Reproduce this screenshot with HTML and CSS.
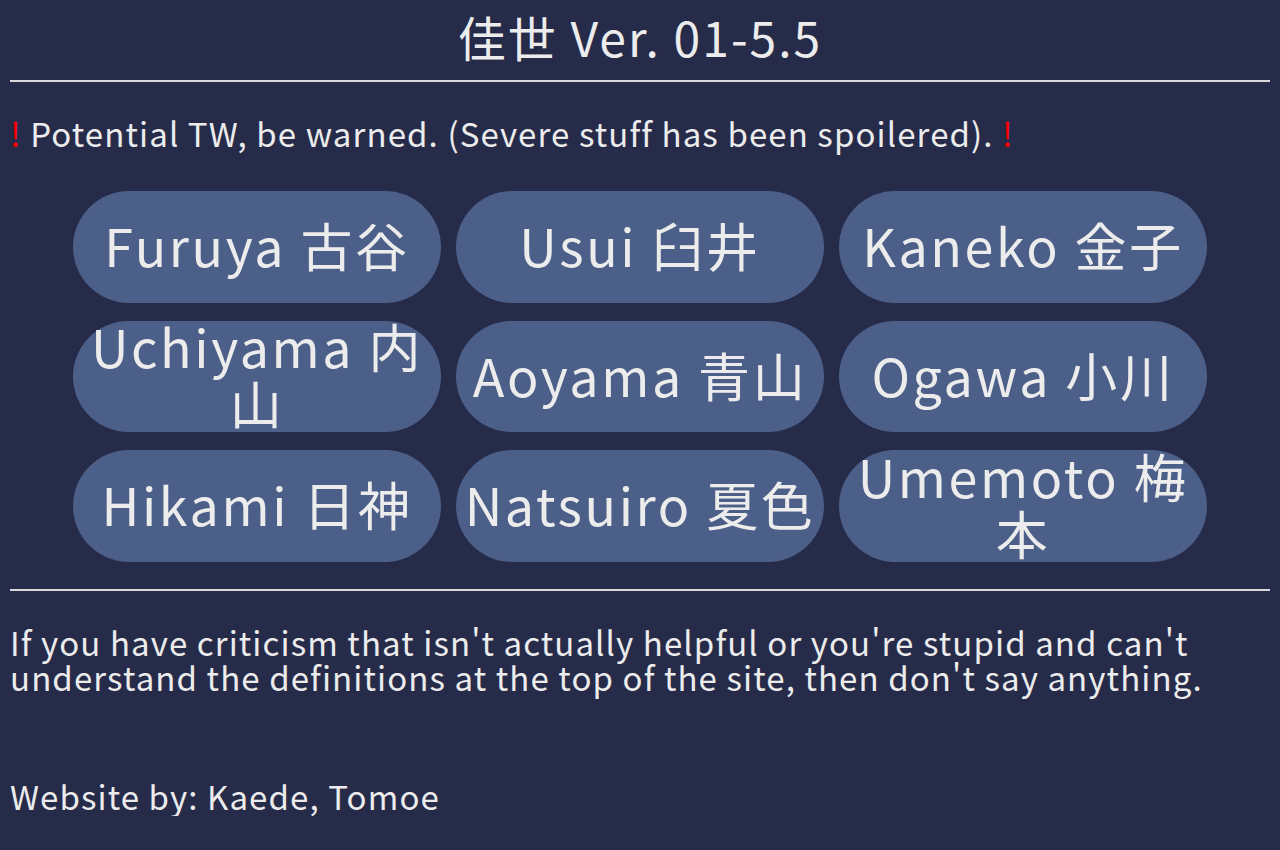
FILE: index.html
```html
<!DOCTYPE html>
<html lang="ja">
<head>
<meta charset="utf-8">
<title>佳世 Ver. 01-5.5</title>
<link rel="stylesheet" href="styles.css">
</head>
<body>
<h1 class="title">佳世 Ver. 01-5.5</h1>
<hr class="rule">
<p class="warning"><span class="bang">!</span> Potential TW, be warned. (Severe stuff has been spoilered). <span class="bang">!</span></p>
<div class="grid">
  <a class="pill">Furuya 古谷</a>
  <a class="pill">Usui 臼井</a>
  <a class="pill">Kaneko 金子</a>
  <a class="pill">Uchiyama 内山</a>
  <a class="pill">Aoyama 青山</a>
  <a class="pill">Ogawa 小川</a>
  <a class="pill">Hikami 日神</a>
  <a class="pill">Natsuiro 夏色</a>
  <a class="pill">Umemoto 梅本</a>
</div>
<hr class="rule rule-lower">
<p class="note">If you have criticism that isn't actually helpful or you're stupid and can't understand the definitions at the top of the site, then don't say anything.</p>
<p class="credit">Website by: Kaede, Tomoe</p>
</body>
</html>
```
FILE: styles.css
```css
html { background: #272b4a; }
body {
  margin: 0;
  padding: 0 10px;
  background: #272b4a;
  color: #ececec;
  font-family: "Noto Sans CJK JP", "Noto Sans", sans-serif;
}
.title {
  margin: 0;
  padding-top: 6px;
  height: 80px;
  box-sizing: border-box;
  font-size: 48px;
  font-weight: 400;
  line-height: 60px;
  letter-spacing: 2px;
  text-align: center;
}
.rule {
  margin: 0;
  border: 0;
  border-top: 2px solid #d9d9d9;
  height: 0;
}
.warning {
  margin: 0;
  padding-top: 27px;
  height: 80px;
  font-size: 33px;
  line-height: 48px;
  letter-spacing: 1.1px;
  box-sizing: border-box;
}
.bang { color: #ff0000; }
.grid {
  display: grid;
  grid-template-columns: repeat(3, 368px);
  grid-template-rows: 112px 111px 112px;
  column-gap: 15px;
  row-gap: 18px;
  justify-content: center;
  padding-top: 29px;
  padding-bottom: 27px;
}
.pill {
  display: flex;
  align-items: center;
  justify-content: center;
  text-align: center;
  padding-bottom: 5px;
  box-sizing: border-box;
  background: #4b5f88;
  border-radius: 56px;
  font-size: 52px;
  line-height: 57px;
  letter-spacing: 2.6px;
  color: #ececec;
}
.note {
  margin: 0;
  padding-top: 34px;
  font-size: 33px;
  line-height: 35px;
  letter-spacing: 1.1px;
}
.credit {
  margin: 0;
  padding-top: 81px;
  font-size: 33px;
  line-height: 40px;
  letter-spacing: 1.1px;
}
```
